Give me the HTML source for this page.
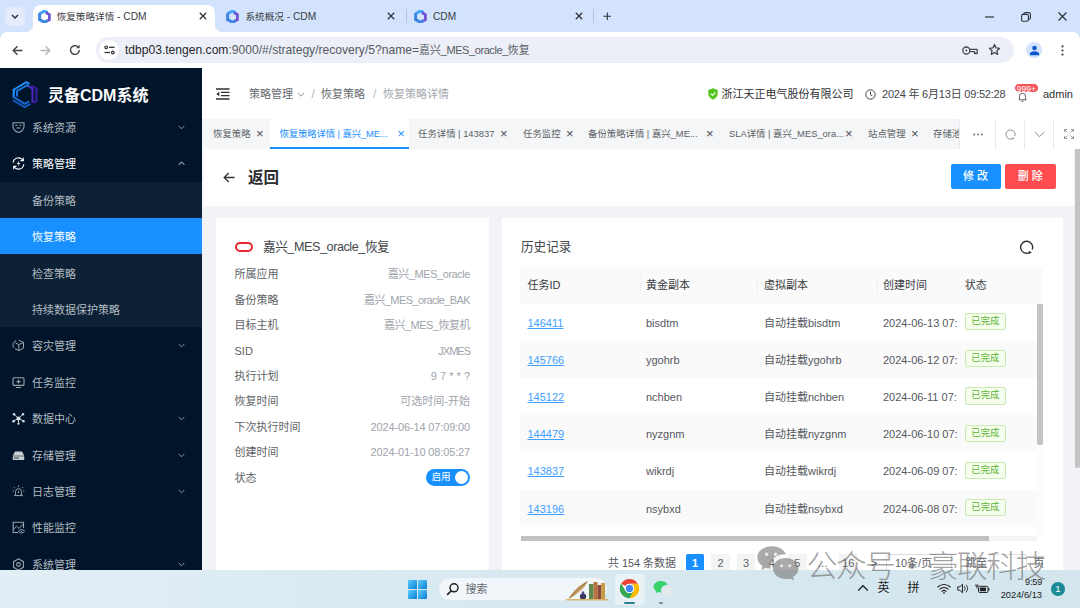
<!DOCTYPE html>
<html lang="zh-CN">
<head>
<meta charset="utf-8">
<title>恢复策略详情 - CDM</title>
<style>
*{box-sizing:border-box;margin:0;padding:0}
html,body{width:1080px;height:608px;overflow:hidden;background:#fff}
body{font-family:"Liberation Sans","Noto Sans CJK SC",sans-serif;font-size:11px;color:#303133;position:relative}
.abs{position:absolute}
svg{display:block}
/* ---------- browser chrome ---------- */
#tabstrip{position:absolute;left:0;top:0;width:1080px;height:42px;background:#d3e3fd}
#toolbar svg,#toolbar div{z-index:3}
#toolbar{position:absolute;left:0;top:32px;width:1080px;height:36px;background:#fff;border-radius:7px 7px 0 0}
.btab i{font-style:normal;font-size:9.6px}
.btab{position:absolute;top:.8px;height:32px;font-size:10.2px;color:#3c4043;line-height:32px;white-space:nowrap}
#tab1{position:absolute;left:33px;top:5px;width:182px;height:27px;background:#fff;border-radius:8px 8px 0 0}
#tab1:before,#tab1:after{content:"";position:absolute;bottom:0;width:8px;height:8px;background:radial-gradient(circle at 0 0,transparent 8px,#fff 8.5px)}
#tab1:before{left:-8px}
#tab1:after{right:-8px;background:radial-gradient(circle at 100% 0,transparent 8px,#fff 8.5px)}
#tabdd{position:absolute;left:5px;top:7px;width:20px;height:19px;border-radius:6px;background:#e4ecfc}
#omni{position:absolute;left:96px;top:37px;width:917.5px;height:26px;border-radius:13px;background:#eceff8}
#url{position:absolute;left:124.9px;top:37px;height:26px;line-height:26px;font-size:12.1px;color:#555a60;white-space:nowrap}
#url .cj{font-size:10.85px}
/* ---------- sidebar ---------- */
#side{position:absolute;left:0;top:68px;width:202px;height:502px;background:#001529;overflow:hidden}
#logoText{position:absolute;left:48px;top:17px;font-size:16px;font-weight:bold;color:#fff;line-height:22px;white-space:nowrap;letter-spacing:0}
.mi{position:absolute;left:0;width:202px;height:36.4px;line-height:36.4px;color:#b3bac1;font-size:11px;white-space:nowrap}
.mi .t{position:absolute;left:32px;top:1px}
.mi.sub .t{left:32px}
.mi .ic{position:absolute;left:12px;top:12px;width:13px;height:13px}
.mi .chev{position:absolute;left:178px;top:15px;width:7px;height:7px}
#submenu{position:absolute;left:0;top:113.6px;width:202px;height:145.6px;background:#0c2135}
#active{position:absolute;left:0;top:150px;width:202px;height:36.4px;background:#1890ff}
/* ---------- header ---------- */
#hdr{position:absolute;left:202px;top:68px;width:878px;height:51px;background:#fff}
.bc{position:absolute;top:.8px;height:51px;line-height:51px;font-size:11px;white-space:nowrap}

/* ---------- tags bar ---------- */
#tags{position:absolute;left:202px;top:119px;width:878px;height:30px;background:#f5f6f8;overflow:hidden}
.tag{position:absolute;top:0;height:30px;line-height:30px;font-size:9.4px;color:#5a5e64;white-space:nowrap}
.tag .x{position:absolute;top:.3px;font-size:13px;color:#4a4d52;margin-left:-.6px}
#tagAct{position:absolute;left:68px;top:0;width:139px;height:30px;background:#fff;border-bottom:2px solid #1890ff}
.tbtn{position:absolute;top:0;height:30px;background:#fff;border-left:1px solid #e8eaee}
/* ---------- main ---------- */
#main{position:absolute;left:202px;top:149px;width:878px;height:421px;background:#f2f3f7;overflow:hidden}
#back{position:absolute;left:1px;top:0;width:871px;height:57px;background:#fff}
#vscroll{position:absolute;left:872.6px;top:0;width:5.4px;height:421px;background:#f2f3f7}
#vscroll i{position:absolute;left:0;top:0;width:5.4px;height:319.4px;background:#c4c4c4;border-radius:0 0 2px 2px}
.btn{position:absolute;top:15px;height:25px;line-height:25px;border-radius:2px;color:#fff;font-size:11px;font-weight:500;text-align:center;letter-spacing:3px;padding-left:3px}
#cardL{position:absolute;left:14px;top:69px;width:272.5px;height:360px;background:#fff}
#cardR{position:absolute;left:300px;top:69px;width:561px;height:360px;background:#fff}
.row{position:absolute;left:18.5px;width:235.5px;height:16px;line-height:17.6px;font-size:11px;color:#606266;white-space:nowrap}
.row b{position:absolute;right:0;top:0;font-weight:normal;color:#a0a4ab;font-size:11px}
#sw{position:absolute;left:210px;top:251.3px;width:44px;height:16.5px;border-radius:9px;background:#1890ff;color:#fff;font-size:9.5px;line-height:16.5px;padding-left:5.5px}
#sw i{position:absolute;right:1.7px;top:1.7px;width:13px;height:13px;border-radius:50%;background:#fff}
/* table */
#tbl{position:absolute;left:18px;top:49px;width:523px;height:270px;overflow:hidden}
.tr{position:absolute;left:0;width:523px;height:37.2px;line-height:38.6px;font-size:11px;color:#55585e;white-space:nowrap}
.tr.h{background:#fafafa;color:#3a3d42;font-size:11px;height:36.6px;line-height:37.4px}
.tr.s{background:#fafafa}
.tr span{position:absolute;top:0}
.sep{position:absolute;top:9px;width:1px;height:17px;background:#f0f0f2}
.c1{left:7.5px}.c2{left:126px}.c3{left:244px}.c4{left:363px}.c5{left:444.7px}
.tr a{color:#409eff;text-decoration:underline}
.st{position:absolute;left:444.7px;top:9.4px;width:41.2px;height:17.3px;line-height:15.3px;border:1px solid #c9ebb3;background:#f5fded;color:#5cb532;border-radius:2px;font-size:9.3px;text-align:center}

/* ---------- pagination ---------- */
#pg{position:absolute;left:0;top:336.2px;width:561px;height:19px;font-size:10.9px;color:#606266;line-height:19px;white-space:nowrap}
#pg span{position:absolute;top:0}
#pg .n{width:18.6px;height:19px;background:#f4f4f5;text-align:center;border-radius:1.5px}
#pg .n.a{background:#1890ff;color:#fff;font-weight:bold}
/* ---------- taskbar ---------- */
#task{position:absolute;left:0;top:569.5px;width:1080px;height:38.5px;background:linear-gradient(90deg,#e2eef5 0,#d7e8f0 50%,#d3e6ee 100%);font-family:"Liberation Sans","Noto Sans CJK SC",sans-serif}
#task .tx{position:absolute;color:#1b1b1b;white-space:nowrap}
#srch{position:absolute;left:437.5px;top:7.7px;width:170.5px;height:23.6px;border-radius:12px;background:#f1f6fb;border:0.5px solid #dfe7ee}
/* ---------- watermark ---------- */
#wm,#wmi{z-index:20}
#wm{position:absolute;left:806.4px;top:543px;letter-spacing:-1.7px;font-size:31px;line-height:42px;color:rgba(108,108,108,.64);font-family:"Noto Sans CJK SC",sans-serif;font-weight:300;white-space:nowrap;word-spacing:-3.2px}
</style>
</head>
<body>
<!-- ================= browser chrome ================= -->
<div id="tabstrip">
  <div id="tabdd"><svg width="20" height="19" viewBox="0 0 20 19"><path d="M7 8l3 3 3-3" fill="none" stroke="#30343a" stroke-width="1.5"/></svg></div>
  <div id="tab1"></div>
<svg class="abs" style="left:38px;top:9.500px" width="13" height="13" viewBox="0 0 26 26"><path d="M3 7.500L13 2l6 3.300" fill="none" stroke="#45a3f7" stroke-width="6"/><path d="M3.200 6.500v12.500L13 24.500l6-3.300" fill="none" stroke="#3c86e2" stroke-width="6"/><path d="M16 5.500l6.800 3.700v10.300l-4 2.200" fill="none" stroke="#6f52d2" stroke-width="5.500"/></svg><svg class="abs" style="left:226px;top:9.500px" width="13" height="13" viewBox="0 0 26 26"><path d="M3 7.500L13 2l6 3.300" fill="none" stroke="#45a3f7" stroke-width="6"/><path d="M3.200 6.500v12.500L13 24.500l6-3.300" fill="none" stroke="#3c86e2" stroke-width="6"/><path d="M16 5.500l6.800 3.700v10.300l-4 2.200" fill="none" stroke="#6f52d2" stroke-width="5.500"/></svg><svg class="abs" style="left:413.5px;top:9.500px" width="13" height="13" viewBox="0 0 26 26"><path d="M3 7.500L13 2l6 3.300" fill="none" stroke="#45a3f7" stroke-width="6"/><path d="M3.200 6.500v12.500L13 24.500l6-3.300" fill="none" stroke="#3c86e2" stroke-width="6"/><path d="M16 5.500l6.800 3.700v10.300l-4 2.200" fill="none" stroke="#6f52d2" stroke-width="5.500"/></svg><svg class="abs" style="left:198.5px;top:12px" width="8" height="8" viewBox="0 0 8 8"><path d="M.8.800l6.400 6.400M7.200.800L.8 7.200" stroke="#30343a" stroke-width="1.300" fill="none"/></svg><svg class="abs" style="left:386.5px;top:12px" width="8" height="8" viewBox="0 0 8 8"><path d="M.8.800l6.400 6.400M7.200.800L.8 7.200" stroke="#30343a" stroke-width="1.300" fill="none"/></svg><svg class="abs" style="left:574.5px;top:12px" width="8" height="8" viewBox="0 0 8 8"><path d="M.8.800l6.400 6.400M7.200.800L.8 7.200" stroke="#30343a" stroke-width="1.300" fill="none"/></svg>
  <div class="abs" style="left:405.500px;top:9px;width:1px;height:14px;background:#b4c2e2"></div>
  <div class="abs" style="left:592.500px;top:9px;width:1px;height:14px;background:#b4c2e2"></div>
  <svg class="abs" style="left:602.700px;top:11.700px" width="8.600" height="8.600" viewBox="0 0 10 10"><path d="M5 .5v9M.5 5h9" stroke="#30343a" stroke-width="1.300" fill="none"/></svg>
  <svg class="abs" style="left:984.500px;top:15.500px" width="9" height="2" viewBox="0 0 9 2"><path d="M0 1h9" stroke="#30343a" stroke-width="1.200"/></svg>
  <svg class="abs" style="left:1020.500px;top:11.500px" width="10" height="10" viewBox="0 0 10 10"><rect x=".6" y="2.400" width="6.800" height="6.800" rx="1.500" fill="none" stroke="#30343a" stroke-width="1.100"/><path d="M2.800 2.200V2A1.400 1.400 0 0 1 4.200.6H8A1.400 1.400 0 0 1 9.400 2v3.800A1.400 1.400 0 0 1 8 7.200h-.4" fill="none" stroke="#30343a" stroke-width="1.100"/></svg>
  <svg class="abs" style="left:1057.500px;top:11.700px" width="9" height="9" viewBox="0 0 9 9"><path d="M.5.500l8 8M8.500.500l-8 8" stroke="#30343a" stroke-width="1.200" fill="none"/></svg>
  <div class="btab" style="left:56.700px"><i>恢复策略详情</i> - CDM</div>
  <div class="btab" style="left:245.500px"><i>系统概况</i> - CDM</div>
  <div class="btab" style="left:433px">CDM</div>
</div>
<div id="toolbar">
  <svg class="abs" style="left:12px;top:12.500px" width="11" height="11" viewBox="0 0 11 11"><path d="M10.500 5.500H1.500M5.500 1.200L1.200 5.500l4.300 4.300" fill="none" stroke="#3f4347" stroke-width="1.400"/></svg>
  <svg class="abs" style="left:40px;top:12.500px" width="11" height="11" viewBox="0 0 11 11"><path d="M.5 5.500h9M5.500 1.200l4.300 4.300-4.300 4.300" fill="none" stroke="#b5b8bc" stroke-width="1.400"/></svg>
  <svg class="abs" style="left:69px;top:12px" width="12" height="12" viewBox="0 0 12 12"><path d="M10.300 6A4.400 4.400 0 1 1 8.700 2.600" fill="none" stroke="#3f4347" stroke-width="1.400"/><path d="M10.600.8v3.500H7.100z" fill="#3f4347"/></svg>
  <svg class="abs" style="left:961.500px;top:13.500px" width="16" height="9" viewBox="0 0 16 9"><circle cx="4.300" cy="4.500" r="3.500" fill="none" stroke="#474b50" stroke-width="1.300"/><circle cx="4.300" cy="4.500" r="1" fill="#474b50"/><path d="M7.800 3.300h7.400v4.200h-2.600V5.700H7.800" fill="none" stroke="#474b50" stroke-width="1.300" stroke-linejoin="round"/></svg>
  <svg class="abs" style="left:988px;top:11px" width="13" height="13" viewBox="0 0 24 24"><path d="M12 2.800l2.800 6.200 6.700.7-5 4.600 1.400 6.700L12 17.600 6.100 21l1.400-6.700-5-4.600 6.700-.7z" fill="none" stroke="#3f4347" stroke-width="2.300" stroke-linejoin="round"/></svg>
  <div class="abs" style="left:1026px;top:9.600px;width:16px;height:16px;border-radius:50%;background:#d3e3fd"></div>
  <svg class="abs" style="left:1028.500px;top:12.500px" width="11" height="11" viewBox="0 0 11 11"><circle cx="5.500" cy="3" r="2.300" fill="#0b57d0"/><path d="M.8 10.200V9c0-1.800 2.700-2.700 4.700-2.700s4.700.9 4.700 2.700v1.200z" fill="#0b57d0"/></svg>
  <svg class="abs" style="left:1061px;top:12.500px" width="3" height="11" viewBox="0 0 3 11"><circle cx="1.500" cy="1.400" r="1.100" fill="#3f4347"/><circle cx="1.500" cy="5.500" r="1.100" fill="#3f4347"/><circle cx="1.500" cy="9.600" r="1.100" fill="#3f4347"/></svg>
</div>
<div id="omni">
  <div class="abs" style="left:3px;top:3px;width:20px;height:20px;border-radius:50%;background:#fff"></div>
  <svg class="abs" style="left:7.500px;top:8px" width="11" height="10" viewBox="0 0 11 10"><circle cx="2.200" cy="2.300" r="1.300" fill="none" stroke="#30343a" stroke-width="1.200"/><path d="M5 2.300h5.500" stroke="#30343a" stroke-width="1.300"/><circle cx="8.800" cy="7.500" r="1.300" fill="none" stroke="#30343a" stroke-width="1.200"/><path d="M.5 7.500H6" stroke="#30343a" stroke-width="1.300"/></svg>
</div>
<div id="url"><span style="color:#26282c">tdbp03.tengen.com</span>:9000/#/strategy/recovery/5?name=<span class="cj">嘉兴</span><span style="font-size:11px;letter-spacing:-.42px">_MES_oracle_</span><span class="cj">恢复</span></div>

<!-- ================= sidebar ================= -->
<div id="side">
  <svg class="abs" style="left:12px;top:12.500px" width="26" height="27" viewBox="0 0 26 27">
    <g fill="none" stroke-linejoin="miter" stroke-linecap="butt">
      <path d="M.8 9.200L14.300 1.200l3.200 1.700" stroke="#1f8ff8" stroke-width="1.900"/>
      <path d="M3.800 10.800L15 4.300l3.800 2" stroke="#1a7fe8" stroke-width="1.900"/>
      <path d="M1.700 8.500v8.300" stroke="#1f8ff8" stroke-width="2.200"/>
      <path d="M5 10.200v5.200" stroke="#1a7fe8" stroke-width="1.800"/>
      <path d="M.8 15.600l11.900 7.300 4.500-2.500" stroke="#1668d6" stroke-width="1.900"/>
      <path d="M.8 19.300l11.900 6.800 5.800-3.200" stroke="#1259c4" stroke-width="1.900"/>
      <path d="M16.300 5.300l4.200 2.300v14.200" stroke="#4a26b8" stroke-width="2.100"/>
      <path d="M19.500 4.800l5 2.800v12.300l-3.500 2" stroke="#3a1c9e" stroke-width="2.100"/>
    </g>
  </svg>
  <div id="logoText">灵备CDM系统</div>
  <div id="submenu"></div>
  <div id="active"></div>
  <div class="mi" style="top:41px"><svg class="ic" viewBox="0 0 13 13"><path d="M1 1.800h11v3.400c0 3-2.300 5.200-5.500 6.300C3.300 10.400 1 8.200 1 5.200z" fill="none" stroke="#9aa3ae" stroke-width="1.100"/><path d="M3.300 4.300h2.200M7.500 4.300h2.200M4.500 7h4" stroke="#9aa3ae" stroke-width="1"/></svg><span class="t">系统资源</span><svg class="chev" viewBox="0 0 7 7"><path d="M.7 2l2.800 2.800L6.300 2" fill="none" stroke="#8b95a1" stroke-width="1"/></svg></div>
  <div class="mi" style="top:77.4px;color:#fff"><svg class="ic" viewBox="0 0 13 13"><path d="M1.200 5.800A5.400 5.400 0 0 1 11 3.200M11.800 7.200A5.400 5.400 0 0 1 2 9.800" fill="none" stroke="#fff" stroke-width="1.100"/><path d="M11.300.8v2.800H8.500M1.700 12.200V9.400h2.800" fill="none" stroke="#fff" stroke-width="1.100"/><path d="M7.200 3.500L4.800 7h1.700L5.800 9.600 8.300 6H6.600z" fill="#fff"/></svg><span class="t">策略管理</span><svg class="chev" viewBox="0 0 7 7"><path d="M.7 4.800L3.500 2l2.800 2.800" fill="none" stroke="#e8ebef" stroke-width="1"/></svg></div>
  <div class="mi sub" style="top:113.8px"><span class="t">备份策略</span></div>
  <div class="mi sub" style="top:150.2px;color:#fff"><span class="t">恢复策略</span></div>
  <div class="mi sub" style="top:186.6px"><span class="t">检查策略</span></div>
  <div class="mi sub" style="top:223px"><span class="t">持续数据保护策略</span></div>
  <div class="mi" style="top:259.4px"><svg class="ic" viewBox="0 0 13 13"><path d="M6.800 1.200l4.700 2.200v5.800L6.800 11.600 3 9.800M6.800 5.600l4.700-2.200M6.800 5.600v6M6.800 5.600L3.500 4" fill="none" stroke="#9aa3ae" stroke-width="1"/><path d="M4.200 1.600A4.800 4.800 0 0 0 1.700 8.700" fill="none" stroke="#9aa3ae" stroke-width="1"/></svg><span class="t">容灾管理</span><svg class="chev" viewBox="0 0 7 7"><path d="M.7 2l2.800 2.800L6.300 2" fill="none" stroke="#8b95a1" stroke-width="1"/></svg></div>
  <div class="mi" style="top:295.8px"><svg class="ic" viewBox="0 0 13 13"><rect x="1" y="1.800" width="11" height="7.600" rx="1" fill="none" stroke="#9aa3ae" stroke-width="1.100"/><path d="M4 11.500h5M6.500 3.600v4M4.500 5.600h4" stroke="#9aa3ae" stroke-width="1.100"/></svg><span class="t">任务监控</span></div>
  <div class="mi" style="top:332.2px"><svg class="ic" viewBox="0 0 13 13"><g stroke="#dfe3e8" stroke-width=".9"><path d="M6.500 6.500L2 2.200M6.500 6.500L11 2.200M6.500 6.500L1.500 9M6.500 6.500l5 2.500M6.500 6.500v5"/></g><g fill="#dfe3e8"><circle cx="6.500" cy="6.500" r="2"/><circle cx="2" cy="2.200" r="1.200"/><circle cx="11" cy="2.200" r="1.200"/><circle cx="1.500" cy="9.200" r="1.200"/><circle cx="11.500" cy="9.200" r="1.200"/><circle cx="6.500" cy="11.700" r="1.100"/></g></svg><span class="t">数据中心</span><svg class="chev" viewBox="0 0 7 7"><path d="M.7 2l2.800 2.800L6.300 2" fill="none" stroke="#8b95a1" stroke-width="1"/></svg></div>
  <div class="mi" style="top:368.6px"><svg class="ic" viewBox="0 0 13 13"><path d="M3 2.500h7l2.300 4.300H.7z" fill="#c9ced5"/><rect x=".7" y="7.300" width="11.600" height="3.600" rx=".6" fill="#c9ced5"/><path d="M2 9.100h5" stroke="#001529" stroke-width=".8"/></svg><span class="t">存储管理</span><svg class="chev" viewBox="0 0 7 7"><path d="M.7 2l2.800 2.800L6.300 2" fill="none" stroke="#8b95a1" stroke-width="1"/></svg></div>
  <div class="mi" style="top:405px"><svg class="ic" viewBox="0 0 13 13"><path d="M3.600 10V6.600a2.900 2.900 0 0 1 5.800 0V10M2 10.600h9M6.500.6v1.500M2 2.200l1 1M11 2.200l-1 1M.6 6h1.300M11.100 6h1.300M6.500 6v2" fill="none" stroke="#9aa3ae" stroke-width="1"/></svg><span class="t">日志管理</span><svg class="chev" viewBox="0 0 7 7"><path d="M.7 2l2.800 2.800L6.300 2" fill="none" stroke="#8b95a1" stroke-width="1"/></svg></div>
  <div class="mi" style="top:441.4px"><svg class="ic" viewBox="0 0 13 13"><path d="M11.500 7V1.200H1.200v10.300H6" fill="none" stroke="#9aa3ae" stroke-width="1.100"/><path d="M1.500 8.500l3-3.300 2.500 2.300 4.300-4.500" fill="none" stroke="#9aa3ae" stroke-width="1"/><ellipse cx="9.500" cy="10.300" rx="2.800" ry="1.700" fill="none" stroke="#9aa3ae" stroke-width=".9"/><circle cx="9.500" cy="10.300" r=".7" fill="#9aa3ae"/></svg><span class="t">性能监控</span></div>
  <div class="mi" style="top:477.8px"><svg class="ic" viewBox="0 0 13 13"><path d="M6.500.8l4.900 2.850v5.700L6.500 12.200 1.600 9.350v-5.700z" fill="none" stroke="#9aa3ae" stroke-width="1.100"/><circle cx="6.500" cy="6.500" r="1.900" fill="none" stroke="#9aa3ae" stroke-width="1.100"/></svg><span class="t">系统管理</span><svg class="chev" viewBox="0 0 7 7"><path d="M.7 2l2.800 2.800L6.300 2" fill="none" stroke="#8b95a1" stroke-width="1"/></svg></div>
</div>

<!-- ================= header ================= -->
<div id="hdr">
  <svg class="abs" style="left:14px;top:20px" width="14" height="12" viewBox="0 0 14 12"><path d="M0 1h13.500M5 4.300h8.500M5 7.700h8.500M0 11h13.500" stroke="#303133" stroke-width="1.300"/><path d="M3.300 3.700v4.600L.3 6z" fill="#303133"/></svg>
  <div class="bc" style="left:47px;color:#666a70">策略管理</div>
  <svg class="abs" style="left:94.500px;top:23.500px" width="8" height="6" viewBox="0 0 8 6"><path d="M.8 1l3.200 3.200L7.200 1" fill="none" stroke="#8c9097" stroke-width="1"/></svg>
  <div class="bc" style="left:109.500px;color:#b4b7bc;font-size:12px">/</div>
  <div class="bc" style="left:119px;color:#666a70">恢复策略</div>
  <div class="bc" style="left:171px;color:#b4b7bc;font-size:12px">/</div>
  <div class="bc" style="left:181px;color:#a3a7ae">恢复策略详情</div>
  <svg class="abs" style="left:505.500px;top:20px" width="10" height="12" viewBox="0 0 10 12"><path d="M5 .3l4.700 1.800v3.500c0 3-2 5-4.700 6.100C2.300 10.600.3 8.600.3 5.600V2.100z" fill="#52c41a"/><path d="M2.800 5.700l1.700 1.700 2.900-3" fill="none" stroke="#fff" stroke-width="1.200"/></svg>
  <div class="bc" style="left:519.500px;color:#303133">浙江天正电气股份有限公司</div>
  <svg class="abs" style="left:663px;top:20.800px" width="11" height="11" viewBox="0 0 11 11"><circle cx="5.500" cy="5.500" r="4.700" fill="none" stroke="#44474c" stroke-width="1"/><path d="M5.500 2.600v3.200l2 1.200" fill="none" stroke="#44474c" stroke-width="1"/></svg>
  <div class="bc" style="left:680px;color:#44474c;letter-spacing:-.21px">2024 年 6月13日 09:52:28</div>
  <svg class="abs" style="left:815.500px;top:24px" width="9" height="10" viewBox="0 0 9 10"><path d="M1.500 7.500V4.200a3 3 0 0 1 6 0v3.300M.5 7.800h8M3.500 9.300h2" fill="none" stroke="#606266" stroke-width="1"/></svg>
  <div class="abs" style="left:811.700px;top:14.700px;width:25.300px;height:10.800px;border-radius:5.500px;background:#f5535a;color:#fff;font-size:8.500px;line-height:10.600px;text-align:center;border:.5px solid #fff">999+</div>
  <div class="bc" style="left:841px;color:#303133">admin</div>
</div>

<!-- ================= tags bar ================= -->
<div id="tags">
  <div id="tagAct"></div>
  <div class="tag" style="left:11px">恢复策略<span class="x" style="left:43.5px">×</span></div>
  <div class="tag" style="left:77.4px;color:#1890ff;letter-spacing:-.1px">恢复策略详情 | 嘉兴_ME...<span class="x" style="left:118.5px;color:#1890ff">×</span></div>
  <div class="tag" style="left:216px">任务详情 | 143837<span class="x" style="left:82.5px">×</span></div>
  <div class="tag" style="left:321px">任务监控<span class="x" style="left:43.5px">×</span></div>
  <div class="tag" style="left:386px">备份策略详情 | 嘉兴_ME...<span class="x" style="left:118.5px">×</span></div>
  <div class="tag" style="left:527px">SLA详情 | 嘉兴_MES_ora...<span class="x" style="left:116.5px">×</span></div>
  <div class="tag" style="left:666px">站点管理<span class="x" style="left:43.5px">×</span></div>
  <div class="tag" style="left:731px">存储池</div>
  <div class="tbtn" style="left:757px;width:36px"><svg class="abs" style="left:13px;top:13.500px" width="10" height="3" viewBox="0 0 10 3"><circle cx="1.200" cy="1.500" r=".9" fill="#606266"/><circle cx="5" cy="1.500" r=".9" fill="#606266"/><circle cx="8.800" cy="1.500" r=".9" fill="#606266"/></svg></div>
  <div class="tbtn" style="left:793px;width:29px"><svg class="abs" style="left:9px;top:10px" width="11" height="11" viewBox="0 0 11 11"><path d="M7.600 9.600A4.600 4.600 0 1 1 9.800 7.200" fill="none" stroke="#8c9097" stroke-width="1"/><path d="M7.300 10.400l.4-2.300 1.900 1.300z" fill="#8c9097"/></svg></div>
  <div class="tbtn" style="left:822px;width:29px"><svg class="abs" style="left:9px;top:11.500px" width="11" height="7" viewBox="0 0 11 7"><path d="M.7.800l4.800 5 4.800-5" fill="none" stroke="#8c9097" stroke-width="1"/></svg></div>
  <div class="tbtn" style="left:851px;width:27px"><svg class="abs" style="left:9.500px;top:10px" width="10" height="10" viewBox="0 0 10 10"><path d="M.5 3V.5H3M7 .5h2.500V3M9.500 7v2.500H7M3 9.500H.5V7M.8.800l2.700 2.700M9.200.800L6.500 3.500M9.200 9.200L6.500 6.500M.8 9.200l2.700-2.700" fill="none" stroke="#8c9097" stroke-width=".9"/></svg></div>
</div>

<!-- ================= main ================= -->
<div id="main">
  <div id="back">
    <svg class="abs" style="left:20px;top:22.500px" width="12" height="11" viewBox="0 0 12 11"><path d="M11.500 5.500H1.500M5.700 1L1.200 5.500 5.700 10" fill="none" stroke="#303133" stroke-width="1.300"/></svg>
    <div class="abs" style="left:45px;top:18px;font-size:15.5px;font-weight:bold;color:#2b2d30;line-height:22px">返回</div>
    <div class="btn" style="left:747.5px;width:50px;background:#1890ff">修改</div>
    <div class="btn" style="left:802px;width:50.5px;background:#ff4d4f">删除</div>
  </div>
  <div id="cardL">
    <div class="abs" style="left:19.300px;top:23.800px;width:17.800px;height:10.400px;border:2px solid #e8272f;border-radius:5.500px"></div>
    <div class="abs" style="left:47px;top:19px;font-size:12.6px;color:#44474c;line-height:20px;white-space:nowrap;letter-spacing:-.42px">嘉兴_MES_oracle_恢复</div>
    <div class="row" style="top:48.4px">所属应用<b style="letter-spacing:-.45px">嘉兴_MES_oracle</b></div>
    <div class="row" style="top:73.7px">备份策略<b style="letter-spacing:-.6px">嘉兴_MES_oracle_BAK</b></div>
    <div class="row" style="top:99.4px">目标主机<b style="letter-spacing:-.5px">嘉兴_MES_恢复机</b></div>
    <div class="row" style="top:124.6px">SID<b style="letter-spacing:-1px">JXMES</b></div>
    <div class="row" style="top:150.3px">执行计划<b>9 7 * * ?</b></div>
    <div class="row" style="top:175.2px">恢复时间<b>可选时间-开始</b></div>
    <div class="row" style="top:200.5px">下次执行时间<b style="letter-spacing:-.14px">2024-06-14 07:09:00</b></div>
    <div class="row" style="top:225.8px">创建时间<b style="letter-spacing:-.14px">2024-01-10 08:05:27</b></div>
    <div class="row" style="top:251.5px">状态</div>
    <div id="sw">启用<i></i></div>
  </div>
  <div id="cardR">
    <svg class="abs" style="left:516.500px;top:21.500px" width="15" height="15" viewBox="0 0 15 15"><path d="M10.200 12.700A6 6 0 1 1 13.200 9.500" fill="none" stroke="#303133" stroke-width="1.400"/><path d="M9.600 14l.5-3.200 2.700 1.800z" fill="#303133"/></svg>
    <div class="abs" style="left:19px;top:18.5px;font-size:12.6px;color:#44474c;line-height:20px">历史记录</div>
    <div id="tbl">
  <div class="tr h" style="top:0"><span class="c1">任务ID</span><span class="c2">黄金副本</span><span class="c3">虚拟副本</span><span class="c4">创建时间</span><span class="c5">状态</span><i class="sep" style="left:119.800px"></i><i class="sep" style="left:237.300px"></i><i class="sep" style="left:356.800px"></i></div>
  <div class="tr" style="top:36.6px"><span class="c1"><a>146411</a></span><span class="c2">bisdtm</span><span class="c3">自动挂载bisdtm</span><span class="c4">2024-06-13 07:</span><div class="st">已完成</div></div>
  <div class="tr s" style="top:73.8px"><span class="c1"><a>145766</a></span><span class="c2">ygohrb</span><span class="c3">自动挂载ygohrb</span><span class="c4">2024-06-12 07:</span><div class="st">已完成</div></div>
  <div class="tr" style="top:111.0px"><span class="c1"><a>145122</a></span><span class="c2">nchben</span><span class="c3">自动挂载nchben</span><span class="c4">2024-06-11 07:</span><div class="st">已完成</div></div>
  <div class="tr s" style="top:148.2px"><span class="c1"><a>144479</a></span><span class="c2">nyzgnm</span><span class="c3">自动挂载nyzgnm</span><span class="c4">2024-06-10 07:</span><div class="st">已完成</div></div>
  <div class="tr" style="top:185.4px"><span class="c1"><a>143837</a></span><span class="c2">wikrdj</span><span class="c3">自动挂载wikrdj</span><span class="c4">2024-06-09 07:</span><div class="st">已完成</div></div>
  <div class="tr s" style="top:222.6px"><span class="c1"><a>143196</a></span><span class="c2">nsybxd</span><span class="c3">自动挂载nsybxd</span><span class="c4">2024-06-08 07:</span><div class="st">已完成</div></div>
    </div>
    <div class="abs" style="left:535.200px;top:85.800px;width:5.600px;height:233px;background:#fcfcfc"><div style="width:5.600px;height:141.600px;background:#c4c4c4;border-radius:0 0 2px 2px"></div></div>
    <div class="abs" style="left:19px;top:317.5px;width:516px;height:5.3px;background:#f4f4f4"><div style="width:467.6px;height:5.3px;background:#c1c1c1"></div></div>
    <div id="pg">
      <span style="left:106px;color:#55585e">共 154 条数据</span>
      <span class="n a" style="left:183.7px">1</span>
      <span class="n" style="left:209.3px">2</span>
      <span class="n" style="left:234.8px">3</span>
      <span class="n" style="left:260.4px">4</span>
      <span class="n" style="left:286px">5</span>
      <span class="n" style="left:311.5px;background:none">…</span>
      <span class="n" style="left:337px">16</span>
      <span class="n" style="left:362.6px;background:none;color:#303133">&gt;</span>
      <span style="left:384px;width:66px;height:19px;border:1px solid #dcdfe6;border-radius:2px"></span>
      <span style="left:393px">10条/页</span>
      <span style="left:463.5px">跳至</span>
      <span style="left:488px;width:37px;height:19px;border:1px solid #dcdfe6;border-radius:2px"></span>
      <span style="left:531.5px">页</span>
    </div>
  </div>
  <div id="vscroll"><i></i></div>
</div>

<!-- ================= watermark ================= -->
<svg id="wmi" class="abs" style="left:755px;top:544px" width="48" height="40" viewBox="0 0 48 40">
  <g fill="rgba(120,120,120,.62)">
    <path d="M16.5 2.3C8.6 2.3 2.2 7.3 2.2 13.5c0 3.5 2 6.5 5.200 8.600l-1.300 3.900 4.500-2.300c1.600.5 3.300.8 5.100.9-.3-1-.5-2-.5-3.100 0-6.100 6-11 13.400-11 .8 0 1.500.1 2.200.2C29.500 5.700 23.600 2.300 16.500 2.300z"/>
    <path d="M30.800 14c-7 0-12.800 4.700-12.800 10.500S23.800 35 30.800 35c1.500 0 3-.2 4.300-.6l4 2.100-1.100-3.500c3.300-1.900 5.500-4.900 5.500-8.500C43.500 18.700 37.800 14 30.800 14z"/>
  </g>
  <g fill="#e9edf0"><circle cx="11.600" cy="10.300" r="1.700"/><circle cx="20.500" cy="10.300" r="1.700"/><circle cx="26.600" cy="21.800" r="1.500"/><circle cx="34.800" cy="21.800" r="1.500"/></g>
</svg>
<div id="wm">公众号 · 豪联科技</div>

<!-- ================= taskbar ================= -->
<div id="task">
  <svg class="abs" style="left:407.7px;top:10.6px" width="19" height="19" viewBox="0 0 19 19">
    <defs><linearGradient id="wg" x1="0" y1="0" x2="1" y2="1"><stop offset="0" stop-color="#5ccbfb"/><stop offset="1" stop-color="#0a7fd9"/></linearGradient></defs>
    <rect x="0" y="0" width="9" height="9" rx=".8" fill="url(#wg)"/><rect x="10" y="0" width="9" height="9" rx=".8" fill="url(#wg)"/>
    <rect x="0" y="10" width="9" height="9" rx=".8" fill="url(#wg)"/><rect x="10" y="10" width="9" height="9" rx=".8" fill="url(#wg)"/>
  </svg>
  <div id="srch"></div>
  <svg class="abs" style="left:445.5px;top:12.5px" width="14" height="14" viewBox="0 0 14 14"><circle cx="8" cy="5.800" r="4" fill="none" stroke="#222" stroke-width="1.500"/><path d="M5 9L1.600 12.400" stroke="#222" stroke-width="1.700" stroke-linecap="round"/></svg>
  <div class="tx" style="left:465.5px;top:11px;font-size:11px;line-height:16px;color:#666b72">搜索</div>
  <!-- quill & books illustration -->
  <svg class="abs" style="left:566px;top:9px" width="42" height="22" viewBox="0 0 42 22">
    <path d="M2 20C6 14 12 6 22 2c-2 4-5 8-9 11-3 3-7 5-11 7z" fill="#c9a36a"/>
    <path d="M4 19C9 13 14 8 21 3" stroke="#7d5a2e" stroke-width=".8" fill="none"/>
    <ellipse cx="17" cy="17.500" rx="3.200" ry="3" fill="#3b3560"/><rect x="15.800" y="12.500" width="2.400" height="3" fill="#4b4580"/>
    <rect x="23" y="5" width="4.500" height="15" fill="#5f8a4e"/><rect x="27.500" y="3" width="4" height="17" fill="#b8743c"/><rect x="31.500" y="6" width="3.600" height="14" fill="#8c4a3a"/><rect x="35.100" y="4" width="4" height="16" fill="#c59a4a"/>
    <rect x="0" y="20" width="42" height="1.500" fill="#d9b36a"/>
  </svg>
  <!-- chrome -->
  <div class="abs" style="left:614.5px;top:4px;width:30px;height:31px;border-radius:4px;background:rgba(255,255,255,.45)"></div>
  <svg class="abs" style="left:618.5px;top:8.7px" width="21" height="21" viewBox="0 0 48 48">
    <circle cx="24" cy="24" r="22" fill="#fff"/>
    <path d="M24 2a22 22 0 0 1 19.050 11H24a11 11 0 0 0-9.530 5.500L5 13A22 22 0 0 1 24 2z" fill="#ea4335"/>
    <path d="M43.050 13A22 22 0 0 1 24 46l9.530-16.500A11 11 0 0 0 33.500 18.500L43.050 13z" fill="#fbbc04"/>
    <path d="M43.050 13H24a11 11 0 0 1 9.530 16.500L24 46A22 22 0 0 0 43.050 13z" fill="#fbbc04"/>
    <path d="M24 46A22 22 0 0 1 4.950 13l9.520 16.500A11 11 0 0 0 24 35l-0 11z" fill="#34a853"/>
    <path d="M4.950 13l9.520 16.500A11 11 0 0 0 33.530 29.500L24 46A22 22 0 0 1 4.950 13z" fill="#34a853"/>
    <circle cx="24" cy="24" r="10.500" fill="#fff"/><circle cx="24" cy="24" r="8.300" fill="#4285f4"/>
  </svg>
  <div class="abs" style="left:624px;top:32.3px;width:10.5px;height:2.2px;border-radius:1px;background:#2f7f92"></div>
  <!-- wechat -->
  <svg class="abs" style="left:653px;top:10px" width="21" height="19" viewBox="0 0 22 20">
    <path d="M8 1C3.900 1 .6 3.700.6 7.100c0 1.900 1.100 3.600 2.800 4.700l-.7 2.200 2.500-1.300c.9.300 1.800.4 2.800.4h.6A5.600 5.600 0 0 1 8.300 11c0-3.300 3.100-5.900 7-5.900C14.600 2.700 11.600 1 8 1z" fill="#36d26a"/>
    <path d="M15.500 6.500c-3.300 0-6 2.200-6 5s2.700 5 6 5c.7 0 1.400-.1 2-.3l1.900 1-.5-1.700c1.600-.9 2.600-2.400 2.600-4 0-2.800-2.700-5-6-5z" fill="#e4e9ec"/>
  </svg>
  <div class="abs" style="left:658.500px;top:32.500px;width:4px;height:2px;border-radius:1px;background:#7d8a92"></div>
  <!-- tray -->
  <svg class="abs" style="left:856.500px;top:14px" width="12" height="8" viewBox="0 0 12 8"><path d="M1.200 6.500L6 1.700l4.800 4.800" fill="none" stroke="#222" stroke-width="1.300"/></svg>
  <div class="tx" style="left:877.500px;top:10.500px;font-size:12px;line-height:17px">英</div>
  <div class="tx" style="left:907.500px;top:10.500px;font-size:12px;line-height:17px">拼</div>
  <svg class="abs" style="left:937px;top:13.500px" width="14" height="11" viewBox="0 0 14 11"><g fill="none" stroke="#222" stroke-width="1.100" stroke-linecap="round"><path d="M.8 4A8.800 8.800 0 0 1 13.200 4"/><path d="M2.900 6.200a5.800 5.800 0 0 1 8.200 0"/><path d="M5 8.300a2.900 2.900 0 0 1 4 0"/></g><circle cx="7" cy="9.800" r=".9" fill="#222"/></svg>
  <svg class="abs" style="left:956.500px;top:13.500px" width="13" height="11" viewBox="0 0 13 11"><path d="M.8 3.800h2l2.700-2.600v8.600L2.800 7.200h-2z" fill="none" stroke="#222" stroke-width="1" stroke-linejoin="round"/><path d="M7.500 3.500a3 3 0 0 1 0 4M9.300 2a5 5 0 0 1 0 7" fill="none" stroke="#222" stroke-width=".9" stroke-linecap="round"/></svg>
  <svg class="abs" style="left:975px;top:13px" width="15" height="12" viewBox="0 0 15 12"><rect x="3.500" y="3.300" width="9.500" height="6.200" rx="1.200" fill="none" stroke="#222" stroke-width="1"/><rect x="4.800" y="4.600" width="6.200" height="3.600" rx=".5" fill="#222"/><rect x="13.300" y="5" width="1.100" height="2.800" rx=".5" fill="#222"/><path d="M.5 3h2.800M1 1.300v1.700M2.800 1.300v1.700M1.900 3v2.500" stroke="#222" stroke-width=".9" fill="none"/></svg>
  <div class="tx" style="left:980px;width:62px;text-align:right;top:6.300px;font-size:9.100px;letter-spacing:-.2px;line-height:13px">9:59</div>
  <div class="tx" style="left:980px;width:62px;text-align:right;top:19.400px;font-size:9.300px;line-height:13px">2024/6/13</div>
  <div class="abs" style="left:1051px;top:12.500px;width:13.600px;height:13.600px;border-radius:50%;background:#1c8a97;color:#fff;font-size:9.500px;line-height:13.600px;text-align:center">1</div>
</div>

</body>
</html>
